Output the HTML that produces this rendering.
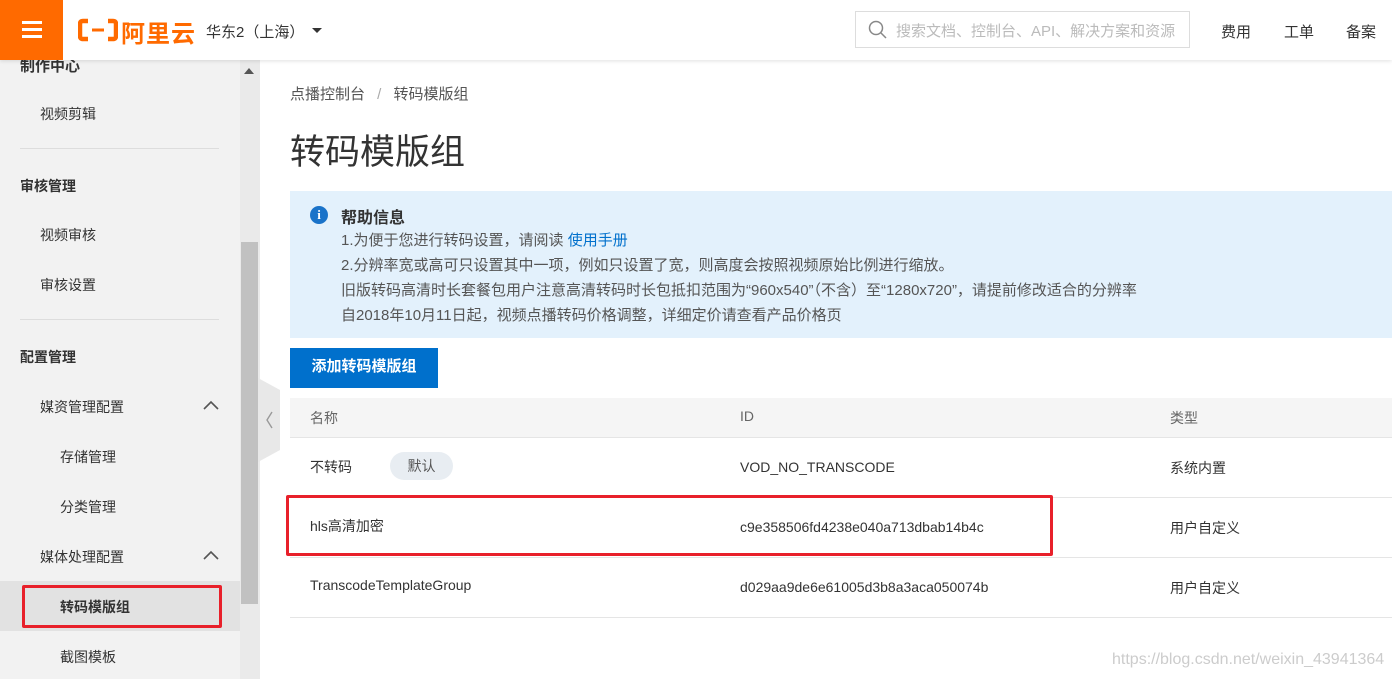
<!DOCTYPE html>
<html><head><meta charset="utf-8"><style>
*{margin:0;padding:0;box-sizing:border-box}
body{width:1392px;height:679px;overflow:hidden;position:relative;background:#fff;font-family:"Liberation Sans","Noto Sans CJK SC",sans-serif;font-size:14px;color:#333}
.a{position:absolute;white-space:nowrap}
</style></head><body>
<div class="a" style="left:0;top:60px;width:260px;height:619px;background:#f2f2f2"></div>
<div class="a" style="left:240px;top:60px;width:20px;height:619px;background:#eaeaea"></div>
<div class="a" style="left:241px;top:242px;width:17px;height:362px;background:#c1c1c1"></div>
<div class="a" style="left:244px;top:68px;border:5px solid transparent;border-bottom:6px solid #555;border-top:0"></div>
<div class="a" style="left:20px;top:55px;font-size:15px;font-weight:bold;color:#333">制作中心</div>
<div class="a" style="left:40px;top:104px">视频剪辑</div>
<div class="a" style="left:20px;top:148px;width:199px;height:1px;background:#ddd"></div>
<div class="a" style="left:20px;top:176px;font-weight:bold">审核管理</div>
<div class="a" style="left:40px;top:225px">视频审核</div>
<div class="a" style="left:40px;top:275px">审核设置</div>
<div class="a" style="left:20px;top:319px;width:199px;height:1px;background:#ddd"></div>
<div class="a" style="left:20px;top:347px;font-weight:bold">配置管理</div>
<div class="a" style="left:40px;top:397px">媒资管理配置</div>
<svg class="a" style="left:203px;top:400px" width="16" height="10"><path d="M1 9L8 2L15 9" stroke="#555" stroke-width="1.6" fill="none"/></svg>
<div class="a" style="left:60px;top:447px">存储管理</div>
<div class="a" style="left:60px;top:497px">分类管理</div>
<div class="a" style="left:40px;top:547px">媒体处理配置</div>
<svg class="a" style="left:203px;top:550px" width="16" height="10"><path d="M1 9L8 2L15 9" stroke="#555" stroke-width="1.6" fill="none"/></svg>
<div class="a" style="left:0;top:581px;width:240px;height:50px;background:#e2e2e2"></div>
<div class="a" style="left:22px;top:585px;width:200px;height:43px;border:3px solid #e8202a;border-radius:2px"></div>
<div class="a" style="left:60px;top:597px;font-weight:bold">转码模版组</div>
<div class="a" style="left:60px;top:647px">截图模板</div>
<svg class="a" style="left:258px;top:378px" width="24" height="84"><path d="M0 0L22 12V72L0 84Z" fill="#e8e8e8"/><path d="M14 34L9 42L14 50" stroke="#999" fill="none" stroke-width="1.4"/></svg>
<div class="a" style="left:0;top:0;width:1392px;height:60px;background:#fff;box-shadow:0 1px 4px rgba(0,0,0,.12)"></div>
<div class="a" style="left:0;top:0;width:63px;height:60px;background:#ff6a00"></div>
<div class="a" style="left:22px;top:21px;width:20px;height:3px;background:#fff;box-shadow:0 7px 0 #fff,0 14px 0 #fff"></div>
<svg class="a" style="left:78px;top:18px" width="40" height="24"><path d="M10 3H5Q2 3 2 6V18Q2 21 5 21H10M30 3H35Q38 3 38 6V18Q38 21 35 21H30" stroke="#ff6a00" stroke-width="4.5" fill="none"/><rect x="14" y="10.5" width="12" height="3" fill="#ff6a00"/></svg>
<div class="a" style="left:121px;top:14px;font-size:24px;font-weight:bold;color:#ff6a00;letter-spacing:1px">阿里云</div>
<div class="a" style="left:206px;top:21px;font-size:15px">华东2（上海）</div>
<div class="a" style="left:312px;top:28px;border:5px solid transparent;border-top:5px solid #333;border-bottom:0"></div>
<div class="a" style="left:855px;top:11px;width:335px;height:37px;border:1px solid #ddd"></div>
<svg class="a" style="left:868px;top:20px" width="20" height="20"><circle cx="8" cy="8" r="6.5" stroke="#888" stroke-width="1.5" fill="none"/><path d="M13 13L18 18" stroke="#888" stroke-width="1.5"/></svg>
<div class="a" style="left:896px;top:20px;color:#bbb;font-size:15px">搜索文档、控制台、API、解决方案和资源</div>
<div class="a" style="left:1221px;top:21px;font-size:15px">费用</div>
<div class="a" style="left:1284px;top:21px;font-size:15px">工单</div>
<div class="a" style="left:1346px;top:21px;font-size:15px">备案</div>
<div class="a" style="left:290px;top:83px;color:#555;font-size:15px">点播控制台 <span style="color:#aaa;margin:0 8px">/</span> 转码模版组</div>
<div class="a" style="left:290px;top:124px;font-size:35px;color:#333">转码模版组</div>
<div class="a" style="left:290px;top:191px;width:1102px;height:147px;background:#e3f1fc"></div>
<div class="a" style="left:310px;top:206px;width:18px;height:18px;border-radius:50%;background:#1a73c9;color:#fff;font-size:13px;font-weight:bold;text-align:center;line-height:18px;font-family:'Liberation Serif',serif">i</div>
<div class="a" style="left:341px;top:204px;font-size:16px;font-weight:bold">帮助信息</div>
<div class="a" style="left:341px;top:228px;color:#555;line-height:25px;font-size:15px">1.为便于您进行转码设置，请阅读 <span style="color:#0070cc">使用手册</span><br>2.分辨率宽或高可只设置其中一项，例如只设置了宽，则高度会按照视频原始比例进行缩放。<br>旧版转码高清时长套餐包用户注意高清转码时长包抵扣范围为“960x540”（不含）至“1280x720”，请提前修改适合的分辨率<br>自2018年10月11日起，视频点播转码价格调整，详细定价请查看产品价格页</div>
<div class="a" style="left:290px;top:348px;width:148px;height:40px;background:#0070cc;color:#fff;font-weight:bold;text-align:center;line-height:38px;font-size:15px">添加转码模版组</div>
<div class="a" style="left:290px;top:398px;width:1102px;height:40px;background:#f5f5f5;border-bottom:1px solid #e5e5e5"></div>
<div class="a" style="left:310px;top:408px;color:#666">名称</div>
<div class="a" style="left:740px;top:408px;color:#666">ID</div>
<div class="a" style="left:1170px;top:408px;color:#666">类型</div>
<div class="a" style="left:310px;top:457px">不转码</div>
<div class="a" style="left:390px;top:452px;width:63px;height:28px;border-radius:14px;background:#e8edf2;color:#555;text-align:center;line-height:28px">默认</div>
<div class="a" style="left:740px;top:459px">VOD_NO_TRANSCODE</div>
<div class="a" style="left:1170px;top:458px">系统内置</div>
<div class="a" style="left:290px;top:497px;width:1102px;height:1px;background:#e5e5e5"></div>
<div class="a" style="left:310px;top:516px">hls高清加密</div>
<div class="a" style="left:740px;top:519px">c9e358506fd4238e040a713dbab14b4c</div>
<div class="a" style="left:1170px;top:518px">用户自定义</div>
<div class="a" style="left:286px;top:495px;width:767px;height:61px;border:3px solid #e8202a;border-radius:2px"></div>
<div class="a" style="left:290px;top:557px;width:1102px;height:1px;background:#e5e5e5"></div>
<div class="a" style="left:310px;top:577px">TranscodeTemplateGroup</div>
<div class="a" style="left:740px;top:579px">d029aa9de6e61005d3b8a3aca050074b</div>
<div class="a" style="left:1170px;top:578px">用户自定义</div>
<div class="a" style="left:290px;top:617px;width:1102px;height:1px;background:#e5e5e5"></div>
<div class="a" style="left:1112px;top:651px;color:#ccc;font-size:16px">https://blog.csdn.net/weixin_43941364</div>
</body></html>
